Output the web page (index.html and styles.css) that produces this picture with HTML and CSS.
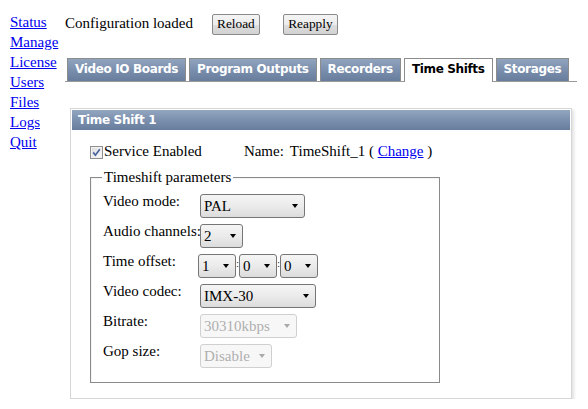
FILE: index.html
```html
<!DOCTYPE html>
<html>
<head>
<meta charset="utf-8">
<title>Time Shifts</title>
<link rel="stylesheet" href="styles.css">
</head>
<body>
<div class="page">
  <nav class="nav">
    <a href="#">Status</a>
    <a href="#">Manage</a>
    <a href="#">License</a>
    <a href="#">Users</a>
    <a href="#">Files</a>
    <a href="#">Logs</a>
    <a href="#">Quit</a>
  </nav>
  <main class="main">
    <div class="toolbar">
      <span class="status">Configuration loaded</span>
      <button class="btn btn-reload">Reload</button>
      <button class="btn btn-reapply">Reapply</button>
    </div>
    <div class="tabs">
      <span class="tab">Video IO Boards</span>
      <span class="tab">Program Outputs</span>
      <span class="tab">Recorders</span>
      <span class="tab tab-active">Time Shifts</span>
      <span class="tab">Storages</span>
    </div>
    <section class="panel">
      <div class="panel-head">Time Shift 1</div>
      <div class="panel-body">
        <div class="svc-row">
          <span class="cb"><svg width="11" height="11" viewBox="0 0 11 11"><path d="M2.2 5.4 L4.4 8.2 L8.8 2.2" fill="none" stroke="#4a66a0" stroke-width="1.7"/></svg></span>
          <span class="svc-label">Service Enabled</span>
          <span class="name">Name:<span class="name-val">TimeShift_1</span> ( <a href="#">Change</a> )</span>
        </div>
        <fieldset class="params">
          <legend>Timeshift parameters</legend>
          <div class="grid">
            <label class="lbl">Video mode:</label>
            <span class="sel w-mode"><select><option>PAL</option></select></span>

            <label class="lbl">Audio channels:</label>
            <span class="sel w-audio"><select><option>2</option></select></span>

            <label class="lbl">Time offset:</label>
            <span class="time">
              <span class="sel w-time"><select><option>1</option></select></span><span class="colon">:</span><span class="sel w-time"><select><option>0</option></select></span><span class="colon">:</span><span class="sel w-time"><select><option>0</option></select></span>
            </span>

            <label class="lbl">Video codec:</label>
            <span class="sel w-codec"><select><option>IMX-30</option></select></span>

            <label class="lbl">Bitrate:</label>
            <span class="sel w-bitrate sel-disabled"><select disabled><option>30310kbps</option></select></span>

            <label class="lbl">Gop size:</label>
            <span class="sel w-gop sel-disabled"><select disabled><option>Disable</option></select></span>
          </div>
        </fieldset>
      </div>
    </section>
  </main>
</div>
</body>
</html>
```

FILE: styles.css
```css
html, body {
  margin: 0;
  padding: 0;
  background: #ffffff;
}

body {
  font-family: "Liberation Serif", "Times New Roman", serif;
  font-size: 15px;
  color: #000;
}

a {
  color: #0000ee;
  text-decoration: underline;
}

.page {
  display: flex;
  align-items: flex-start;
}

.nav {
  width: 55px;
  padding: 12px 0 0 10px;
  display: flex;
  flex-direction: column;
  line-height: 20px;
}

.main {
  width: 512px;
}

.toolbar {
  display: flex;
  align-items: center;
  height: 22px;
  margin-top: 13px;
}

.status {
  line-height: 17px;
  margin-top: -1px;
}

.btn {
  font-family: "Liberation Serif", "Times New Roman", serif;
  font-size: 13.33px;
  color: #000;
  height: 21px;
  padding: 0 4px;
  border: 1px solid #8a8a8a;
  border-radius: 2px;
  background: linear-gradient(#f4f4f4 0%, #ececec 50%, #dedede 51%, #d2d2d2 100%);
  box-sizing: border-box;
}

.btn-reload {
  margin-left: 19px;
  width: 48px;
}

.btn-reapply {
  margin-left: 23px;
  width: 55px;
}

.tabs {
  display: flex;
  align-items: flex-end;
  margin-top: 23px;
  padding-left: 2px;
  border-bottom: 1px solid #9a9a9a;
}

.tab {
  font-family: "DejaVu Sans", Verdana, sans-serif;
  font-weight: bold;
  font-size: 12px;
  letter-spacing: -0.35px;
  color: #ffffff;
  height: 22px;
  line-height: 21px;
  padding: 0 7px;
  margin-right: 3px;
  border: 1px solid #8c8c8c;
  border-bottom: none;
  background: linear-gradient(#91a4be 0%, #7a8fad 50%, #687d9c 100%);
  white-space: nowrap;
}

.tab-active {
  background: #ffffff;
  color: #000000;
  height: 23px;
  margin-bottom: -1px;
}

.panel {
  margin: 26px 5px 0;
  border: 1px solid #d6d6d6;
  padding: 1px;
  box-shadow: 2px 2px 3px rgba(0, 0, 0, 0.12);
  background: #ffffff;
}

.panel-head {
  font-family: "DejaVu Sans", Verdana, sans-serif;
  font-weight: bold;
  font-size: 12px;
  letter-spacing: -0.3px;
  color: #ffffff;
  height: 20px;
  line-height: 20px;
  padding-left: 6px;
  background: linear-gradient(#93a6c0 0%, #7b90ae 50%, #687d9c 100%);
}

.panel-body {
  padding: 13px 0 14px 18px;
}

.svc-row {
  display: flex;
  align-items: center;
  height: 17px;
}

.cb {
  width: 11px;
  height: 11px;
  border: 1px solid #8f8f8f;
  background: linear-gradient(135deg, #dcdcdc, #fbfbfb);
  box-shadow: inset 0 0 0 1px #f2f2f2;
  display: flex;
  margin-top: 2px;
}

.svc-label {
  margin-left: 1px;
}

.name {
  margin-left: 42px;
}

.name-val {
  margin-left: 6px;
}

.params {
  width: 350px;
  box-sizing: border-box;
  margin: 9px 0 0 0;
  padding: 8px 0 14px 12px;
  border: 1px solid #8a8a8a;
  box-shadow: inset 1px 1px 0 #f4f4f4;
}

.params legend {
  padding: 0 2px;
  margin-left: -1px;
}

.grid {
  display: grid;
  grid-template-columns: 97px auto;
  grid-auto-rows: 24px;
  row-gap: 6px;
  justify-items: start;
}

.lbl {
  white-space: nowrap;
  line-height: 18px;
  align-self: start;
  margin-top: -2px;
}

.sel {
  position: relative;
  display: inline-block;
  height: 24px;
}

.sel select {
  -webkit-appearance: none;
  appearance: none;
  width: 100%;
  height: 24px;
  box-sizing: border-box;
  margin: 0;
  padding: 0 0 0 3px;
  font-family: "Liberation Serif", "Times New Roman", serif;
  font-size: 15px;
  color: #000;
  border: 1px solid #767676;
  border-radius: 3px;
  background: linear-gradient(#f5f5f5 0%, #ebebeb 50%, #dcdcdc 100%);
  outline: none;
}

.sel::after {
  content: "";
  position: absolute;
  right: 7px;
  top: 10px;
  border-top: 4px solid #000;
  border-left: 3.5px solid transparent;
  border-right: 3.5px solid transparent;
  pointer-events: none;
}

.sel-disabled select {
  color: #8d8d8d;
  border-color: #bdbdbd;
  background: #f4f4f4;
}

.sel-disabled::after {
  border-top-color: #a9a9a9;
}

.w-mode { width: 105px; }
.w-audio { width: 43px; }
.w-time { width: 38px; }
.w-codec { width: 116px; }
.w-bitrate { width: 97px; }
.w-gop { width: 72px; }

.time {
  display: flex;
  align-items: flex-start;
  margin-left: -2px;
}

.colon {
  width: 3px;
  font-size: 11px;
  line-height: 18px;
  color: #334;
  overflow: hidden;
  text-align: center;
}
```
